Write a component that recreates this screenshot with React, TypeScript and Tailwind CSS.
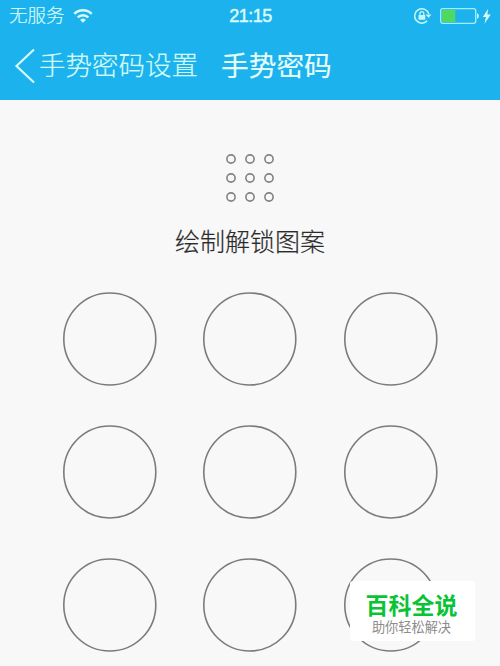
const sans = "font-['Liberation_Sans','Noto_Sans_CJK_SC',sans-serif]";

const cells = Array.from({ length: 9 }, (_, i) => i);

function WifiIcon() {
  return (
    <svg width="20" height="16" viewBox="0 0 20 16" fill="none" stroke="#d9fbfb" strokeWidth="2.5">
      <path d="M1.3 5.9a12.4 12.4 0 0 1 17.4 0" />
      <path d="M4.7 9.4a7.6 7.6 0 0 1 10.6 0" />
      <path d="M10 14.8 7.1 11.9a4.1 4.1 0 0 1 5.8 0Z" fill="#d9fbfb" stroke="none" />
    </svg>
  );
}

function RotationLockIcon() {
  return (
    <svg width="20" height="18" viewBox="0 0 20 18" fill="none" stroke="#c6f8f8" strokeWidth="1.5">
      <path d="M14.2 13.8A7.2 7.2 0 1 1 15.8 7" />
      <path d="M12.6 7.4h5.8l-2.8 3.6Z" fill="#c6f8f8" stroke="none" />
      <rect x="5.5" y="8" width="6.8" height="4.8" rx="0.6" fill="#c6f8f8" stroke="none" />
      <path d="M7 8.3V6.5a1.9 1.9 0 0 1 3.8 0v1.8" strokeWidth="1.3" />
    </svg>
  );
}

function BatteryIcon() {
  return (
    <svg width="52" height="18" viewBox="0 0 52 18" fill="none">
      <rect x="0.7" y="1.7" width="35" height="14.6" rx="2" stroke="#a5eff4" strokeWidth="1.3" />
      <rect x="2" y="3" width="13.3" height="12" rx="0.6" fill="#4cd964" />
      <path d="M37 6.2c2.4.3 2.4 5.3 0 5.6Z" fill="#c6f8f8" />
      <path d="M48.2 1.8 42.8 10h3.2l-1.6 6.8 6.4-9.2h-3.5Z" fill="#d9fbfb" />
    </svg>
  );
}

function StatusBar() {
  return (
    <div className="grid h-8 grid-cols-[1fr_auto_1fr] items-center pr-[8px] pl-[9px] text-[#d9fbfb]">
      <div className="flex items-center gap-2">
        <span className="text-[18.5px] leading-8 font-light [-webkit-text-stroke:0.2px]">无服务</span>
        <WifiIcon />
      </div>
      <span className="text-[18px] leading-8 font-normal tracking-[-0.5px] [-webkit-text-stroke:0.5px]">
        21:15
      </span>
      <div className="flex items-center justify-end gap-[7px]">
        <RotationLockIcon />
        <BatteryIcon />
      </div>
    </div>
  );
}

function NavBar() {
  return (
    <div className="flex h-[68px] items-center pl-[14px] text-[#d4fbf8]">
      <svg width="22" height="36" viewBox="0 0 22 36" fill="none" stroke="currentColor" strokeWidth="2.2">
        <path d="M20 1.5 2.5 18 20 34.5" />
      </svg>
      <span className="ml-[3px] text-[26.5px] leading-[66px] font-light [-webkit-text-stroke:0.2px]">手势密码设置</span>
      <h1 className="ml-[23px] pt-[2px] text-[27.7px] leading-[66px] font-normal text-[#e8fdfb] [-webkit-text-stroke:0.15px]">
        手势密码
      </h1>
    </div>
  );
}

// Small preview of the pattern that has been drawn
function PatternPreview() {
  return (
    <div className="grid grid-cols-3 gap-[8.75px]">
      {cells.map((i) => (
        <svg key={i} width="10" height="10" viewBox="0 0 10 10" fill="none">
          <circle cx="5" cy="5" r="4.1" stroke="#828282" strokeWidth="1.6" />
        </svg>
      ))}
    </div>
  );
}

function PatternPad() {
  return (
    <div className="grid grid-cols-[94px_94px_94px] gap-x-[46.5px] gap-y-[39px]">
      {cells.map((i) => (
        <svg key={i} className="w-full" height="94" viewBox="0 0 94 94" fill="none">
          <circle cx="46.8" cy="47" r="46" stroke="#7b7b7b" strokeWidth="1.6" />
        </svg>
      ))}
    </div>
  );
}

export default function App() {
  return (
    <div className={`relative h-[666px] w-[500px] overflow-hidden bg-[#f8f8f8] ${sans}`}>
      <header className="h-[100px] bg-[#1bb2ed]">
        <StatusBar />
        <NavBar />
      </header>

      <main className="flex flex-col items-center pt-[54px]">
        <PatternPreview />
        <p className="mt-[20px] mb-[30px] text-[25px] leading-[40px] font-light text-[#2b2b2b] [-webkit-text-stroke:0.2px]">
          绘制解锁图案
        </p>
        <PatternPad />
      </main>

      <div className="absolute top-[581px] left-[350px] flex h-[60px] w-[125px] flex-col items-center rounded-[3px] bg-white pt-[11px] pr-[2px]">
        <strong className="text-[23px] leading-[28px] font-bold text-[#08c435]">百科全说</strong>
        <span className="text-[13.2px] leading-[15px] text-[#8c8c8c]">助你轻松解决</span>
      </div>
    </div>
  );
}
